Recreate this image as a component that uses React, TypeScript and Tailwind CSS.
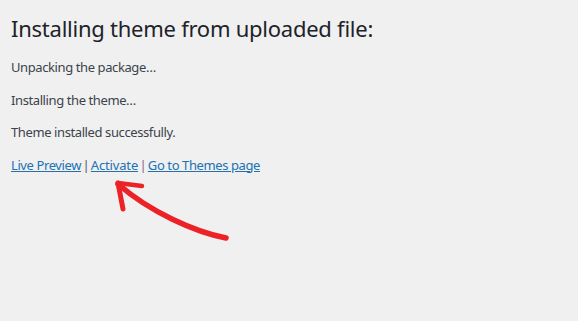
import React from "react";

export default function App() {
  return (
    <div className="relative w-[578px] h-[321px] bg-[#f0f0f1] overflow-hidden text-[#3c434a]" style={{ fontFamily: '"Noto Sans", "Open Sans", sans-serif' }}>
      <div className="px-[11px] pt-[13px]">
        <h1 className="text-[22px] leading-[30px] font-normal tracking-[-0.25px] text-[#1d2327]">Installing theme from uploaded file:</h1>
        <div className="mt-[15px] text-[13px] leading-[19.5px] tracking-[-0.4px] flex flex-col gap-[13px]">
          <p>Unpacking the package&hellip;</p>
          <p>Installing the theme&hellip;</p>
          <p>Theme installed successfully.</p>
          <p>
            <a href="#" className="text-[#2271b1] underline">Live Preview</a>
            <span className="inline-block px-[1.5px] text-[#50575e]">|</span>
            <a href="#" className="text-[#2271b1] underline tracking-[-0.15px]">Activate</a>
            <span className="inline-block px-[1.5px] text-[#8c5e8c]">|</span>
            <a href="#" className="text-[#2271b1] underline">Go to Themes page</a>
          </p>
        </div>
      </div>
      <svg className="absolute left-0 top-0" width="578" height="321" viewBox="0 0 578 321">
        <path d="M226 238 C 195 232, 150 212, 118 184" fill="none" stroke="#ec2227" strokeWidth="5.5" strokeLinecap="round" />
        <path d="M118 183 L 142 186" fill="none" stroke="#ec2227" strokeWidth="4.5" strokeLinecap="round" />
        <path d="M118 183 L 123 209" fill="none" stroke="#ec2227" strokeWidth="5" strokeLinecap="round" />
        <path d="M153 208 C 170 218, 188 226, 204 231" fill="none" stroke="#ec2227" strokeWidth="2" strokeLinecap="round" />
      </svg>
    </div>
  );
}
